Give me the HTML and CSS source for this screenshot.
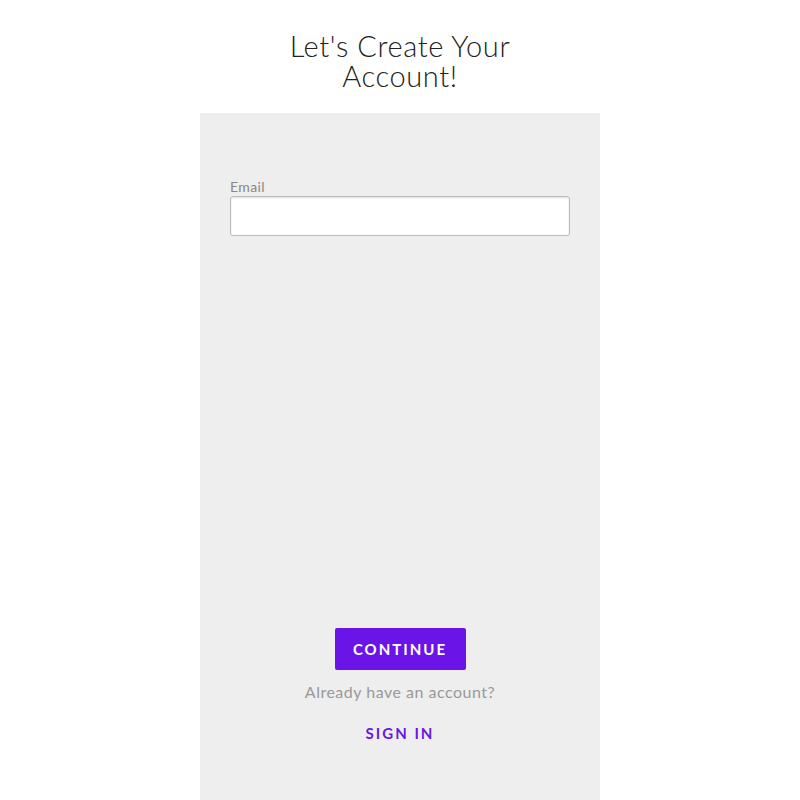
FILE: index.html
```html
<!DOCTYPE html>
<html lang="en">

<head>
    <meta charset="UTF-8">
    <meta name="viewport" content="width=device-width, initial-scale=1.0">
    <title>Create Account</title>
    <link rel="stylesheet" href="styles.css">
</head>

<body>
    <div class="page">
        <h1>Let's Create Your<br>Account!</h1>

        <div class="panel">
            <form id="signup-form" class="signup-form">
                <div class="form-group">
                    <label for="email">Email</label>
                    <input type="email" id="email" name="email">
                </div>
            </form>

            <div class="actions">
                <button type="submit" form="signup-form" class="btn-continue">CONTINUE</button>
                <p class="have-account">Already have an account?</p>
                <a href="#" class="sign-in">SIGN IN</a>
            </div>
        </div>
    </div>
</body>

</html>
```

FILE: styles.css
```css
* {
    margin: 0;
    padding: 0;
    box-sizing: border-box;
}

body {
    font-family: Lato, "Noto Sans", Arial, sans-serif;
    background-color: #fff;
    color: #222;
}

.page {
    display: flex;
    flex-direction: column;
    align-items: center;
    height: 100vh;
}

h1 {
    font-size: 29px;
    font-weight: 300;
    line-height: 30px;
    letter-spacing: 0.6px;
    text-align: center;
    color: #222;
    padding-top: 31px;
    margin-bottom: 22px;
}

.panel {
    width: 400px;
    flex: 1;
    background-color: #eee;
    padding: 0 30px;
    display: flex;
    flex-direction: column;
}

.signup-form {
    margin-top: 66px;
}

label {
    display: block;
    font-size: 14px;
    letter-spacing: 0.4px;
    color: #888;
    line-height: 16px;
    margin-bottom: 1px;
}

input {
    width: 100%;
    height: 40px;
    border: 1px solid #bbb;
    border-radius: 3px;
    background-color: #fff;
    box-shadow: inset 0 1px 2px rgba(0, 0, 0, 0.12);
    font-size: 15px;
    padding: 0 10px;
}

input:focus {
    outline: none;
    border-color: #6a14e8;
}

.actions {
    margin-top: auto;
    padding-bottom: 57px;
    display: flex;
    flex-direction: column;
    align-items: center;
}

.btn-continue {
    width: 131px;
    height: 42px;
    background-color: #6a14e8;
    color: #fff;
    border: none;
    border-radius: 2px;
    font-family: inherit;
    font-size: 15px;
    font-weight: 700;
    letter-spacing: 2px;
    cursor: pointer;
}

.have-account {
    font-size: 16px;
    letter-spacing: 0.5px;
    color: #999;
    margin-top: 12px;
    line-height: 20px;
}

.sign-in {
    font-size: 15px;
    font-weight: 700;
    letter-spacing: 2px;
    color: #6a14e8;
    text-decoration: none;
    margin-top: 21px;
    line-height: 20px;
}
```
